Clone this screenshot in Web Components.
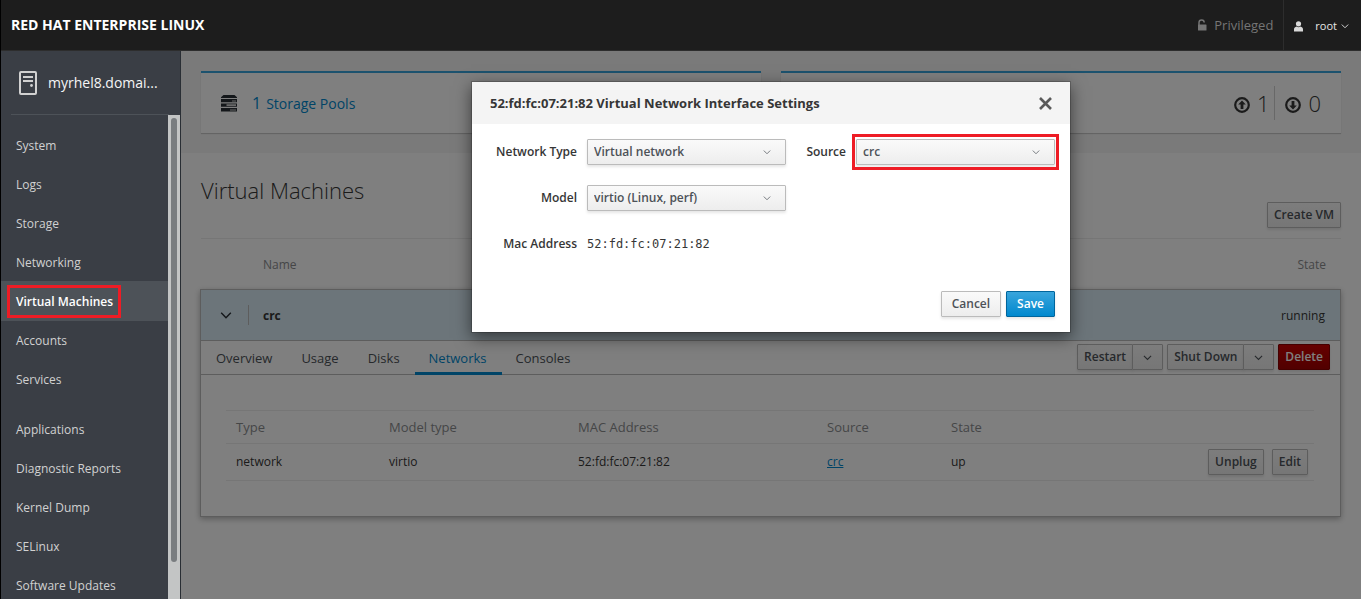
<!DOCTYPE html>
<html lang="en">
<head>
<meta charset="utf-8">
<title>Virtual Machines</title>
<style>
html, body { margin: 0; height: 100%; }
body { font: 13px/20px "Open Sans", "Noto Sans", sans-serif; color: #363636; background: #fff; overflow: hidden; }
</style>
</head>
<body>
<cockpit-shell>
  <cockpit-masthead slot="masthead" brand="RED HAT ENTERPRISE LINUX" user="root"></cockpit-masthead>
  <cockpit-sidebar slot="sidebar" host="myrhel8.domai..."></cockpit-sidebar>
  <vm-page slot="page"></vm-page>
</cockpit-shell>

<script>
const define = (name, html, setup) => {
  const template = document.createElement('template');
  template.innerHTML = html;
  customElements.define(name, class extends HTMLElement {
    constructor() {
      super();
      this.attachShadow({ mode: 'open' }).append(template.content.cloneNode(true));
    }
    connectedCallback() {
      if (setup && !this.ready) { this.ready = true; setup(this, this.shadowRoot); }
    }
  });
};
const chevron = (size, color) =>
  `<svg width="${size}" height="${size}" viewBox="0 0 10 10" fill="none" stroke="${color}" stroke-width="1.2" aria-hidden="true"><path d="M1 3.2 5 7.2 9 3.2"/></svg>`;

define('pf-button', `
<style>
  :host { display: inline-flex; }
  button {
    box-sizing: border-box; height: 26px; margin: 0; padding: 0 var(--pad, 6px); border: 1px solid #bbb;
    display: flex; align-items: center; border-radius: 1px; white-space: nowrap;
    font: 600 12px/18px "Open Sans", "Noto Sans", sans-serif; color: #4d5258;
    background: linear-gradient(#fafafa, #ededed); box-shadow: 0 2px 3px rgba(3,3,3,.1);
  }
  :host([kind="primary"]) button { color: #fff; border-color: #00659c; background: linear-gradient(#39a5dc, #0088ce); }
  :host([kind="danger"]) button { color: #fff; border-color: #8b0000; background: linear-gradient(#c00, #a30000); }
</style>
<button type="button"><slot></slot></button>`);

define('pf-split-button', `
<style>
  :host { display: inline-flex; }
  pf-button + pf-button { margin-left: -1px; --pad: 10px; }
  svg { display: block; }
</style>
<pf-button><slot></slot></pf-button><pf-button>${chevron(9, '#4d5258')}</pf-button>`);

define('pf-select-field', `
<style>
  :host { display: flex; align-items: center; gap: 10px; }
  label { flex: 0 0 var(--label, 90px); text-align: right; font: 600 12px/20px "Open Sans", "Noto Sans", sans-serif; color: #363636; }
  .box { position: relative; flex: 1; display: flex; }
  select {
    appearance: none; box-sizing: border-box; width: 100%; height: 26px; margin: 0; padding: 0 30px 0 6px;
    border: 1px solid #bbb; border-radius: 1px; font: 600 12px/18px "Open Sans", "Noto Sans", sans-serif; color: #4d5258;
    background: linear-gradient(#fafafa, #ededed); box-shadow: 0 2px 3px rgba(3,3,3,.1);
  }
  svg { position: absolute; right: 15px; top: 9px; pointer-events: none; }
  :host([marked]) .box::after { content: ""; position: absolute; inset: -5px -4px; border: 3px solid #ee1c25; pointer-events: none; }
</style>
<label for="choice"></label>
<span class="box"><select id="choice"></select>${chevron(8, '#72767b')}</span>`,
(host, root) => {
  root.querySelector('label').textContent = host.getAttribute('label');
  root.querySelector('select').add(new Option(host.getAttribute('value')));
});

define('cockpit-shell', `
<style>
  :host { display: grid; box-sizing: border-box; height: 100vh; border-left: 1px solid #000;
    grid-template: "top top" 51px "side page" minmax(0, 1fr) / 180px minmax(0, 1fr); }
  slot[name="masthead"] { display: block; grid-area: top; }
  slot[name="sidebar"] { display: grid; grid-area: side; min-height: 0; }
  slot[name="page"] { display: grid; grid-area: page; min-height: 0; }
</style>
<slot name="masthead"></slot><slot name="sidebar"></slot><slot name="page"></slot>`);

define('cockpit-masthead', `
<style>
  :host { display: block; height: 100%; }
  header { box-sizing: border-box; height: 100%; display: flex; align-items: stretch; background: #1d1d1d; border-bottom: 1px solid #2d2d2d; color: #fff; }
  .brand { flex: 1; padding-left: 10px; display: flex; align-items: center; font-size: 14px; font-weight: 700; }
  .mode { display: flex; align-items: center; gap: 7px; padding-right: 10px; font-size: 13px; color: #757575; }
  button { margin: 0; border: 0; border-left: 1px solid #2d2d2d; padding: 2px 12px 0 10px; background: none; color: #e6e6e6;
    display: flex; align-items: center; font: 11px/20px "Open Sans", "Noto Sans", sans-serif; }
  .name { padding: 0 4px 0 12px; }
</style>
<header>
  <div class="brand"></div>
  <div class="mode">
    <svg width="10" height="12" viewBox="0 0 10 12" aria-hidden="true"><path d="M2 6V3.5a2.6 2.6 0 0 1 5.2 0" fill="none" stroke="#757575" stroke-width="1.5"/><rect x="1" y="5.5" width="8.5" height="6" rx=".6" fill="#757575"/></svg>
    <span>Privileged</span>
  </div>
  <button type="button">
    <svg width="9" height="11" viewBox="0 0 9 11" fill="#d9d9d9" aria-hidden="true"><circle cx="4.5" cy="2.8" r="2.6"/><path d="M0 10.5V8.6C0 6.8 1.2 6 2.5 5.6Q4.5 7 6.5 5.6C7.8 6 9 6.8 9 8.6v1.9z"/></svg>
    <span class="name"></span>${chevron(8, '#d9d9d9')}
  </button>
</header>`,
(host, root) => {
  root.querySelector('.brand').textContent = host.getAttribute('brand');
  root.querySelector('.name').textContent = host.getAttribute('user');
});

define('nav-item', `
<style>
  :host { display: block; margin-bottom: -1px; }
  a { box-sizing: border-box; display: flex; align-items: center; height: 40px; padding: 2px 0 0 15px; color: #d1d1d1; text-decoration: none; font-size: 12px; }
  span { position: relative; }
  :host([current]) a { background: #4d5258; color: #fff; font-weight: 600; }
  :host([current]) span::after { content: ""; position: absolute; inset: -7px -8px -6px -9px; border: 3px solid #ee1c25; }
</style>
<a href="#"><span><slot></slot></span></a>`);

define('cockpit-sidebar', `
<style>
  :host { display: grid; grid-template-rows: 64px minmax(0, 1fr); background: #3a3e45; border-right: 1px solid #292e34; min-height: 0; }
  .host { box-sizing: border-box; margin: 0 11px 0 10px; border-bottom: 1px solid #4d5258; display: flex; align-items: center; gap: 11px;
    padding-left: 8px; color: #f5f5f5; font-size: 14px; text-decoration: none; }
  .scroller { display: flex; min-height: 0; overflow: hidden; }
  nav { flex: 1; padding-top: 10px; }
  .group { margin-bottom: 11px; }
  .track { box-sizing: border-box; width: 12px; padding: 3px 3px 37px; background: #c3c5c5; display: flex; }
  .thumb { flex: 1; border-radius: 3px; background: #797d80; }
</style>
<a class="host" href="#">
  <svg width="18" height="24" viewBox="0 0 18 24" fill="none" stroke="#d1d1d1" aria-hidden="true"><rect x="1" y="1" width="16" height="22" rx="1" stroke-width="2"/><path d="M4 6h10M4 10h10" stroke-width="2"/><circle cx="12.5" cy="14.5" r="1.4" fill="#d1d1d1" stroke="none"/></svg>
  <span class="label"></span>
</a>
<div class="scroller">
  <nav>
    <div class="group">
      <nav-item>System</nav-item><nav-item>Logs</nav-item><nav-item>Storage</nav-item><nav-item>Networking</nav-item>
      <nav-item current>Virtual Machines</nav-item><nav-item>Accounts</nav-item><nav-item>Services</nav-item>
    </div>
    <div class="group">
      <nav-item>Applications</nav-item><nav-item>Diagnostic Reports</nav-item><nav-item>Kernel Dump</nav-item>
      <nav-item>SELinux</nav-item><nav-item>Software Updates</nav-item>
    </div>
  </nav>
  <div class="track"><div class="thumb"></div></div>
</div>`,
(host, root) => { root.querySelector('.label').textContent = host.getAttribute('host'); });

define('status-card', `
<style>
  :host { box-sizing: border-box; flex: 1; height: 62px; display: flex; align-items: center; padding: 0 20px;
    background: #fff; border-top: 2px solid #39a5dc; box-shadow: 0 1px 1px rgba(3,3,3,.18); }
</style>
<slot></slot>`);

define('vm-overview', `
<style>
  :host { display: flex; gap: 20px; padding: 20px; background: #f5f5f5; }
  svg { display: block; flex: none; }
  a { display: flex; align-items: baseline; gap: 5px; margin-left: 15px; color: #0088ce; font-size: 14px; text-decoration: none; }
  b { font-weight: 400; font-size: 16px; }
  .counts { margin-left: auto; display: flex; font-size: 22px; line-height: 34px; font-weight: 300; }
  .counts span { display: flex; align-items: center; gap: 7px; }
  .counts svg { margin-top: 3px; }
  .counts span + span { margin-left: 5px; padding-left: 10px; border-left: 1px solid #d1d1d1; }
</style>
<status-card>
  <svg width="16" height="17" viewBox="0 0 16 17" aria-hidden="true"><path d="M2.5 0h11L16 2.2V3H0v-.8z" fill="#292e34"/><path d="M0 4h16v3.2H0zM0 8.4h16v3.4H0zM0 13h16v3.6H0z" fill="#292e34"/><path d="M11 5.4h4v1h-4zM5.5 9.2H15v1.8H5.5zM9 14.6h6v1H9z" fill="#d1d1d1"/></svg>
  <a href="#"><b>1</b> Storage Pools</a>
</status-card>
<status-card>
  <div class="counts">
    <span><svg width="16" height="16" viewBox="0 0 16 16" aria-hidden="true"><circle cx="8" cy="8" r="6.8" fill="none" stroke="#363636" stroke-width="2.2"/><path d="M8 3.6 11.8 7.6H9.4V12H6.6V7.6H4.2z" fill="#363636"/></svg>1</span>
    <span><svg width="16" height="16" viewBox="0 0 16 16" aria-hidden="true"><circle cx="8" cy="8" r="6.8" fill="none" stroke="#363636" stroke-width="2.2"/><path d="M8 12.4 11.8 8.4H9.4V4H6.6v4.4H4.2z" fill="#363636"/></svg>0</span>
  </div>
</status-card>`);

define('vm-networks', `
<style>
  :host { display: block; padding: 35px 26px 35px 25px; }
  table { width: 100%; table-layout: fixed; border-collapse: separate; border-spacing: 0; border-top: 1px solid #ededed; font-size: 13px; line-height: 20px; }
  th, td { box-sizing: border-box; padding: 0 6px 0 10px; border-bottom: 1px solid #ededed; text-align: left; font-weight: 400; }
  th { height: 33px; font-size: 13px; color: #8b8d8f; }
  td { height: 37px; font-size: 12px; }
  .type { width: 153px; } .model { width: 189px; } .mac { width: 249px; } .source { width: 124px; }
  td:last-child { text-align: right; }
  .actions { display: inline-flex; gap: 8px; vertical-align: middle; }
  a { color: #0088ce; }
</style>
<table>
  <thead><tr><th class="type">Type</th><th class="model">Model type</th><th class="mac">MAC Address</th><th class="source">Source</th><th>State</th><th></th></tr></thead>
  <tbody><tr><td>network</td><td>virtio</td><td>52:fd:fc:07:21:82</td><td><a href="#">crc</a></td><td>up</td>
    <td><span class="actions"><pf-button>Unplug</pf-button><pf-button>Edit</pf-button></span></td></tr></tbody>
</table>`);

define('vm-details', `
<style>
  :host { display: block; }
  .bar { box-sizing: border-box; height: 34px; display: flex; justify-content: space-between; border-bottom: 1px solid #bbb; padding: 0 10px 0 1px; }
  .tabs { display: flex; }
  .tabs a { box-sizing: border-box; height: 34px; padding: 7px 15px 0 14px; font-size: 13px; color: #4d5258; text-decoration: none; }
  .tabs a.on { color: #0088ce; border-bottom: 3px solid #0088ce; }
  .actions { display: flex; align-items: flex-start; gap: 4px; padding-top: 3px; }
</style>
<div class="bar">
  <nav class="tabs"><a href="#">Overview</a><a href="#">Usage</a><a href="#">Disks</a><a class="on" href="#">Networks</a><a href="#">Consoles</a></nav>
  <div class="actions"><pf-split-button>Restart</pf-split-button><pf-split-button>Shut Down</pf-split-button><pf-button kind="danger">Delete</pf-button></div>
</div>
<vm-networks></vm-networks>`);

define('vm-list', `
<style>
  :host { display: block; padding: 0 20px; }
  .title { box-sizing: border-box; height: 86px; border-bottom: 1px solid #ededed; display: flex; justify-content: space-between; align-items: flex-end; padding-bottom: 10px; }
  h1 { align-self: flex-start; margin: 21px 0 0; font-size: 22px; line-height: 32px; font-weight: 300; }
  .wrap { margin-left: -1px; }
  table { width: 100%; border-collapse: separate; border-spacing: 0; }
  th, td { box-sizing: border-box; padding: 2px 0 0; text-align: left; }
  thead th { height: 50px; font-size: 12px; font-weight: 400; color: #8b8d8f; }
  .toggle { width: 48px; }
  .name { padding-left: 14px; }
  thead .state { text-align: right; padding-right: 15px; }
  tbody { box-shadow: 0 2px 6px rgba(3,3,3,.3); }
  .row td, .row th { height: 52px; background: #d8ebf5; border: solid #bbb; border-width: 1px 0; font-size: 12px; }
  .row td:first-child { border-left-width: 1px; padding: 0; }
  .row td:last-child { border-right-width: 1px; text-align: right; padding-right: 15px; }
  .row .name { font-weight: 700; }
  button { display: flex; justify-content: center; box-sizing: border-box; width: 48px; height: 20px; align-items: center; margin: 0; padding: 0 0 0 2px; border: 0; border-right: 1px solid #bbb; background: none; }
  .row + tr .panel { padding: 0; border: solid #bbb; border-width: 0 1px 1px; background: #fff; }
</style>
<div class="title"><h1>Virtual Machines</h1><pf-button>Create VM</pf-button></div>
<div class="wrap">
<table>
  <thead><tr><th class="toggle"></th><th class="name">Name</th><th class="state">State</th></tr></thead>
  <tbody>
    <tr class="row"><td><button type="button" aria-label="Collapse crc">${chevron(12, '#292e34')}</button></td><th class="name">crc</th><td>running</td></tr>
    <tr><td class="panel" colspan="3"><vm-details></vm-details></td></tr>
  </tbody>
</table>
</div>`);

define('nic-dialog', `
<style>
  :host { position: absolute; inset: 0; background: rgba(0,0,0,.5); display: flex; justify-content: center; align-items: flex-start; padding-top: 30px; }
  section { box-sizing: border-box; width: 600px; max-width: 100%; background: #fff; background-clip: padding-box; border: 1px solid rgba(3,3,3,.2); box-shadow: 0 5px 15px rgba(3,3,3,.5); }
  header { box-sizing: border-box; height: 42px; padding: 0 18px; display: flex; align-items: center; justify-content: space-between; background: #f4f4f4; }
  h2 { margin: 0; font-size: 13px; line-height: 20px; font-weight: 700; }
  header button { margin: 0; padding: 0; border: 0; background: none; display: flex; }
  .form { display: grid; grid-template-columns: 299fr 259fr; gap: 20px 10px; padding: 15px 15px 0; }
  .short { --label: 50px; }
  .static { grid-column: 1 / -1; display: flex; align-items: center; gap: 10px; height: 26px; margin: 0; }
  dt { width: 90px; text-align: right; font-size: 12px; font-weight: 600; }
  dd { margin: 0; font: 12px/20px "DejaVu Sans Mono", "Liberation Mono", monospace; }
  footer { display: flex; justify-content: flex-end; gap: 5px; padding: 34px 15px 15px; --pad: 10px; }
</style>
<section role="dialog" aria-labelledby="title">
  <header>
    <h2 id="title">52:fd:fc:07:21:82 Virtual Network Interface Settings</h2>
    <button type="button" aria-label="Close"><svg width="13" height="13" viewBox="0 0 13 13" stroke="#5a5a5a" stroke-width="2.6"><path d="m1 1 11 11M12 1 1 12"/></svg></button>
  </header>
  <div class="form">
    <pf-select-field label="Network Type" value="Virtual network"></pf-select-field>
    <pf-select-field class="short" label="Source" value="crc" marked></pf-select-field>
    <pf-select-field label="Model" value="virtio (Linux, perf)"></pf-select-field>
    <dl class="static"><dt>Mac Address</dt><dd>52:fd:fc:07:21:82</dd></dl>
  </div>
  <footer><pf-button>Cancel</pf-button><pf-button kind="primary">Save</pf-button></footer>
</section>`);

define('vm-page', `
<style>:host { display: block; position: relative; overflow: hidden; background: #fff; }</style>
<vm-overview></vm-overview>
<vm-list></vm-list>
<nic-dialog></nic-dialog>`);
</script>
</body>
</html>
